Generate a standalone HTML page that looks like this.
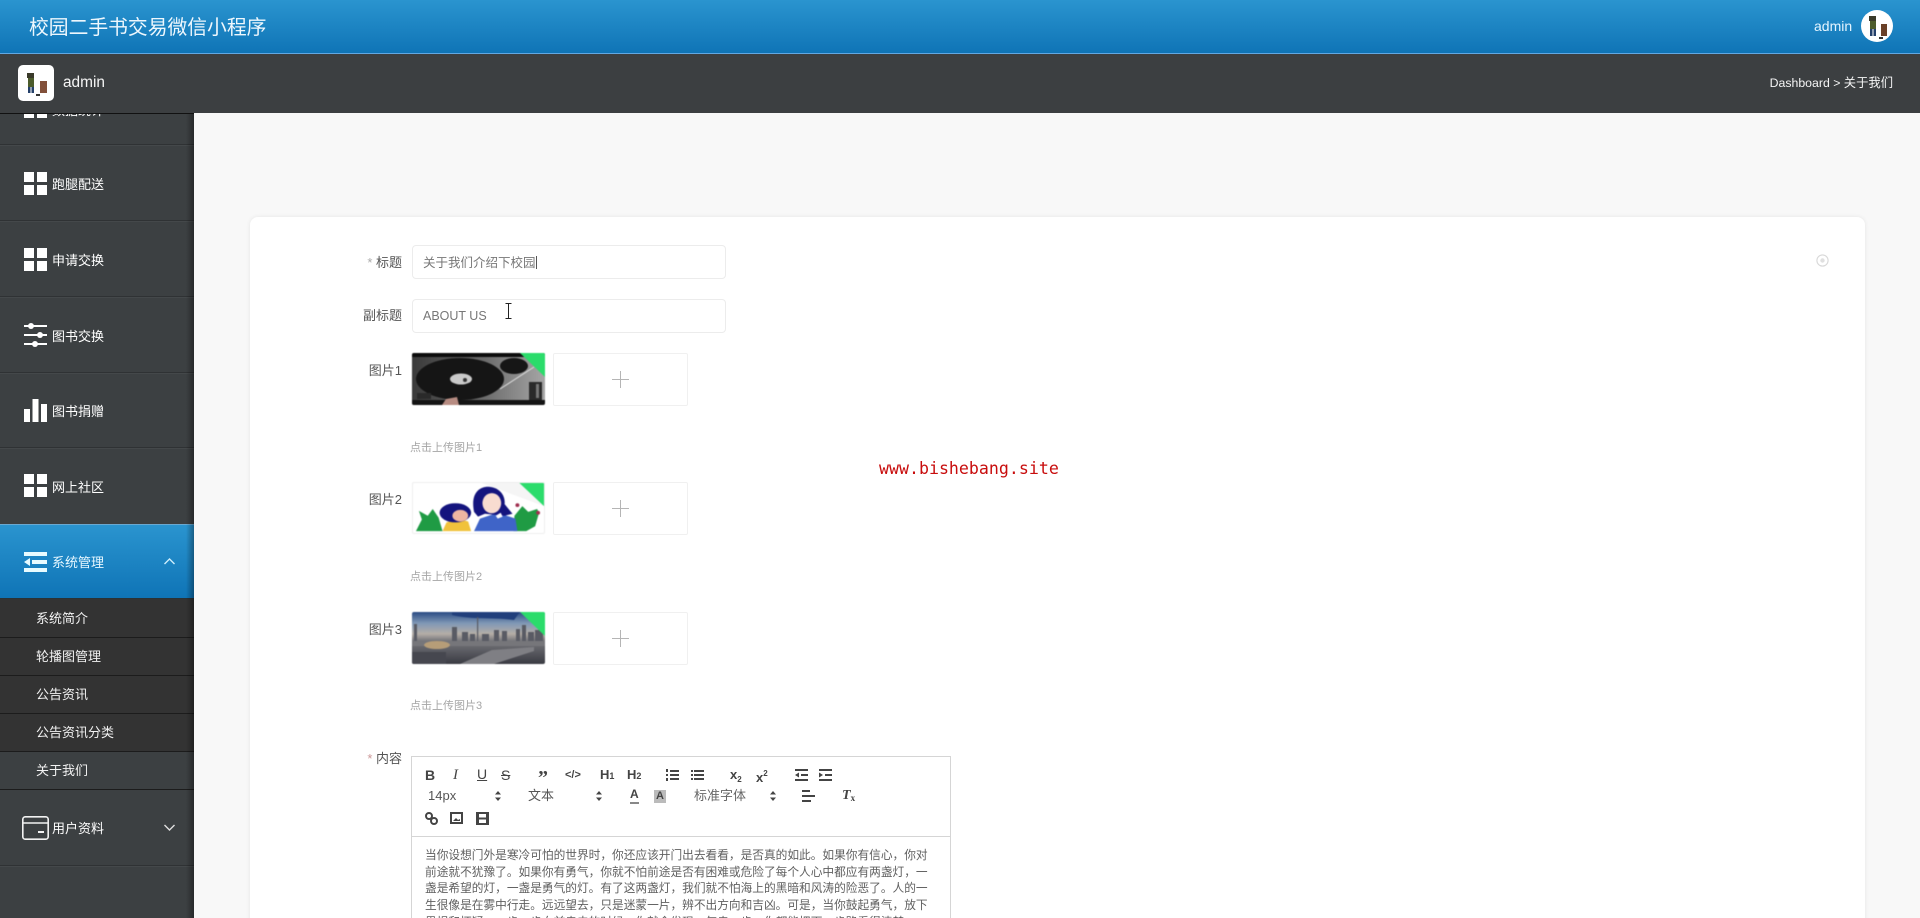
<!DOCTYPE html>
<html lang="zh">
<head>
<meta charset="utf-8">
<title>校园二手书交易微信小程序</title>
<style>
html,body{margin:0;padding:0;width:1920px;height:918px;overflow:hidden;background:#f8f8f8;font-family:"Liberation Sans","Noto Sans CJK SC",sans-serif}
*{box-sizing:border-box}
#root{position:relative;width:1920px;height:918px;overflow:hidden;background:#f8f8f8;filter:blur(.35px)}
.a{position:absolute;white-space:nowrap}
#top{position:absolute;left:0;top:0;width:1920px;height:54px;background:linear-gradient(#2a94cf,#0f74b6);border-bottom:1px solid #62a8e2;z-index:5}
#bar{position:absolute;left:0;top:54px;width:1920px;height:59px;background:#3c3f41;z-index:5}
#side{position:absolute;left:0;top:113px;width:194px;height:805px;background:#3c4042;overflow:hidden;border-top:1px solid #111;z-index:4}
#side:after{content:"";position:absolute;right:0;top:0;width:8px;height:805px;background:linear-gradient(90deg,rgba(0,0,0,0),rgba(0,0,0,.35));pointer-events:none}
.sep{position:absolute;left:0;width:194px;height:2px;background:#2f3234;border-bottom:1px solid #44484a}
.m{position:absolute;left:52px;color:#fff;font-size:13px;line-height:20px;white-space:nowrap}
.s{position:absolute;left:36px;color:#f2f2f2;font-size:13px;line-height:20px;white-space:nowrap}
.sub{position:absolute;left:0;width:194px;background:#333;border-bottom:1px solid #1c1c1c}
#card{position:absolute;left:250px;top:217px;width:1615px;height:720px;background:#fff;border-radius:8px;box-shadow:0 0 5px rgba(0,0,0,.08)}
.l{position:absolute;font-size:13px;line-height:18px;color:#555;text-align:right;white-space:nowrap}
.l i{color:#aaa;font-style:normal}
.in{position:absolute;left:412px;width:314px;height:34px;border:1px solid #ececec;border-radius:4px;background:#fff;font-size:12.5px;line-height:32px;color:#777;padding-left:10px}
.img{position:absolute;left:412px;width:133px;height:52px;overflow:hidden;border-radius:2px;filter:blur(.5px)}
.plus{position:absolute;left:553px;width:135px;height:53px;border:1px solid #f0f0f0;border-radius:2px;background:#fff}
.plus:before{content:"";position:absolute;left:58px;top:25px;width:17px;height:1px;background:#b5b5b5}
.plus:after{content:"";position:absolute;left:66px;top:17px;width:1px;height:17px;background:#b5b5b5}
.h{position:absolute;left:410px;font-size:11px;line-height:14px;color:#a5a5a5;white-space:nowrap}
#ed{position:absolute;left:411px;top:756px;width:540px;height:200px;border:1px solid #d5d5d5;background:#fff}
#tb{position:absolute;left:0;top:0;width:538px;height:80px;border-bottom:1px solid #d5d5d5}
.t{position:absolute;color:#444;font-size:13px;line-height:16px;white-space:nowrap}
.ic{position:absolute;overflow:visible}
#txt{position:absolute;left:425px;top:848px;width:520px;font-size:11.7px;line-height:16.7px;color:#5f5f5f;white-space:nowrap;z-index:2}
#wm{position:absolute;left:879px;top:459px;font-family:"DejaVu Sans Mono","Liberation Mono",monospace;font-size:16.6px;line-height:20px;color:#c80d0d;white-space:nowrap;z-index:6}
</style>
</head>
<body>
<div id="root">
<div id="top">
  <div class="a" style="left:29px;top:14px;font-size:19.8px;line-height:28px;color:#eef7fd">校园二手书交易微信小程序</div>
  <div class="a" style="left:1814px;top:17px;font-size:14px;line-height:18px;color:#e4f5ff">admin</div>
  <svg class="ic" style="left:1861px;top:10px" width="32" height="32" viewBox="0 0 32 32"><circle cx="16" cy="16" r="16" fill="#fff"/><rect x="8" y="6" width="7" height="5" fill="#3a3a2a"/><rect x="9" y="11" width="6" height="8" fill="#4c5c2c"/><rect x="9" y="19" width="2.5" height="7" fill="#24406a"/><rect x="12.5" y="19" width="2.5" height="7" fill="#24406a"/><rect x="20" y="14" width="6" height="12" fill="#6a4028"/><rect x="18" y="27" width="4" height="2" fill="#333"/></svg>
</div>
<div id="bar">
  <div class="a" style="left:18px;top:11px;width:36px;height:36px;background:#fff;border-radius:5px"></div>
  <svg class="ic" style="left:18px;top:11px" width="36" height="36" viewBox="0 0 36 36"><rect x="9" y="8" width="7" height="5" fill="#3a3a2a"/><rect x="10" y="13" width="6" height="9" fill="#4c5c2c"/><rect x="10" y="22" width="2.5" height="6" fill="#24406a"/><rect x="13.5" y="22" width="2.5" height="6" fill="#24406a"/><rect x="22" y="16" width="7" height="12" fill="#82503a"/><rect x="18" y="29" width="4" height="2" fill="#333"/></svg>
  <div class="a" style="left:63px;top:19px;font-size:15.4px;line-height:20px;color:#f5f5f5">admin</div>
  <div class="a" style="right:27px;top:20px;font-size:12.3px;line-height:18px;color:#f5f5f5">Dashboard &gt; 关于我们</div>
</div>

<div id="side">
  <svg class="ic" style="left:24px;top:-19px" width="23" height="23" viewBox="0 0 23 23" fill="#fff"><rect width="10" height="10"/><rect x="13" width="10" height="10"/><rect y="13" width="10" height="10"/><rect x="13" y="13" width="10" height="10"/></svg>
  <div class="m" style="top:-13px">数据统计</div>
  <div class="sep" style="top:30px"></div>

  <svg class="ic" style="left:24px;top:58px" width="23" height="23" viewBox="0 0 23 23" fill="#fff"><rect width="10" height="10"/><rect x="13" width="10" height="10"/><rect y="13" width="10" height="10"/><rect x="13" y="13" width="10" height="10"/></svg>
  <div class="m" style="top:61px">跑腿配送</div>
  <div class="sep" style="top:106px"></div>

  <svg class="ic" style="left:24px;top:134px" width="23" height="23" viewBox="0 0 23 23" fill="#fff"><rect width="10" height="10"/><rect x="13" width="10" height="10"/><rect y="13" width="10" height="10"/><rect x="13" y="13" width="10" height="10"/></svg>
  <div class="m" style="top:137px">申请交换</div>
  <div class="sep" style="top:182px"></div>

  <svg class="ic" style="left:24px;top:209px" width="23" height="23" viewBox="0 0 23 23" fill="#fff"><rect y="2" width="23" height="2"/><rect y="11" width="23" height="2"/><rect y="20" width="23" height="2"/><circle cx="7" cy="3" r="3"/><circle cx="16" cy="12" r="3"/><circle cx="11" cy="21" r="3"/></svg>
  <div class="m" style="top:213px">图书交换</div>
  <div class="sep" style="top:258px"></div>

  <svg class="ic" style="left:24px;top:285px" width="23" height="23" viewBox="0 0 23 23" fill="#fff"><rect y="10" width="6" height="13"/><rect x="8.5" width="6" height="23"/><rect x="17" y="5" width="6" height="18"/></svg>
  <div class="m" style="top:288px">图书捐赠</div>
  <div class="sep" style="top:333px"></div>

  <svg class="ic" style="left:24px;top:360px" width="23" height="23" viewBox="0 0 23 23" fill="#fff"><rect width="10" height="10"/><rect x="13" width="10" height="10"/><rect y="13" width="10" height="10"/><rect x="13" y="13" width="10" height="10"/></svg>
  <div class="m" style="top:364px">网上社区</div>

  <div style="position:absolute;left:0;top:410px;width:194px;height:75px;background:linear-gradient(#2a94cf,#0f74b6);border-top:1px solid #6aa8d0;border-bottom:1px solid #2a3236">
    <svg class="ic" style="left:24px;top:27px" width="23" height="20" viewBox="0 0 23 20" fill="#e8fbff"><rect width="23" height="4"/><rect y="16" width="23" height="4"/><rect x="8" y="8" width="15" height="4"/><path d="M6 6v8L0 10z"/></svg>
    <div class="m" style="top:28px;color:#e6f7ff">系统管理</div>
    <svg class="ic" style="left:164px;top:33px" width="11" height="7" viewBox="0 0 11 7" fill="none" stroke="#cfeefc" stroke-width="1.4"><path d="M.5 6 5.5 1l5 5"/></svg>
  </div>

  <div class="sub" style="top:485px;height:39px"></div>
  <div class="sub" style="top:524px;height:38px"></div>
  <div class="sub" style="top:562px;height:38px"></div>
  <div class="sub" style="top:600px;height:38px"></div>
  <div class="sub" style="top:638px;height:38px;background:#3c4042"></div>
  <div class="s" style="top:495px">系统简介</div>
  <div class="s" style="top:533px">轮播图管理</div>
  <div class="s" style="top:571px">公告资讯</div>
  <div class="s" style="top:609px">公告资讯分类</div>
  <div class="s" style="top:647px">关于我们</div>

  <svg class="ic" style="left:22px;top:702px" width="27" height="24" viewBox="0 0 27 24" fill="none" stroke="#f2f2f2" stroke-width="1.6"><rect x=".8" y=".8" width="25.4" height="22.4" rx="2.5"/><path d="M1 7h25"/><path d="M16 16h6" stroke-width="2"/></svg>
  <div class="m" style="top:705px">用户资料</div>
  <svg class="ic" style="left:164px;top:710px" width="11" height="7" viewBox="0 0 11 7" fill="none" stroke="#e0e0e0" stroke-width="1.4"><path d="M.5 1l5 5 5-5"/></svg>
  <div class="sep" style="top:751px"></div>
</div>

<div id="card"></div>
<svg class="ic" style="left:1816px;top:254px" width="13" height="13" viewBox="0 0 13 13"><circle cx="6.5" cy="6.5" r="5.6" fill="none" stroke="#d8d8d8" stroke-width="1.1"/><circle cx="6.5" cy="6.5" r="2.2" fill="#e0e0e0"/></svg>

<div class="l" style="left:367px;top:254px;width:35px"><i>* </i>标题</div>
<div class="in" style="top:245px;line-height:34px">关于我们介绍下校园<span style="display:inline-block;width:1px;height:13px;background:#555;vertical-align:-2px"></span></div>
<div class="l" style="left:362px;top:307px;width:40px">副标题</div>
<div class="in" style="top:299px">ABOUT US</div>
<svg class="ic" style="left:503px;top:303px;z-index:3" width="11" height="16" viewBox="0 0 11 16" fill="none" stroke="#222" stroke-width="1"><path d="M2.5.5h6M5.5.5v15M2.5 15.5h6"/></svg>

<div class="l" style="left:362px;top:362px;width:40px">图片1</div>
<svg class="img" style="top:353px" viewBox="0 0 133 52" preserveAspectRatio="none">
  <defs><linearGradient id="v" x1="0" x2="1" y1="0" y2="0"><stop offset="0" stop-color="#3a3a3a"/><stop offset=".55" stop-color="#6c6c6c"/><stop offset="1" stop-color="#a6a6a6"/></linearGradient></defs>
  <rect width="133" height="52" fill="url(#v)"/><rect width="133" height="4" fill="#0c0c0c"/><rect y="47" width="133" height="5" fill="#141414"/>
  <ellipse cx="48" cy="26" rx="44" ry="21" fill="#151515"/><ellipse cx="49" cy="26" rx="11" ry="5.5" fill="#c9c9c9"/><circle cx="53" cy="27" r="2" fill="#333"/>
  <ellipse cx="102" cy="13" rx="14" ry="8" fill="#161616"/><path d="M122 14 88 36" stroke="#ddd" stroke-width="1"/>
  <rect x="117" y="29" width="13" height="18" fill="#2a2a2a"/><rect x="124" y="31" width="3" height="14" fill="#777"/>
  <path d="M30 52l4-6 11-2 2 8z" fill="#b78c82"/><rect x="5" y="40" width="14" height="6" fill="#2a2a2a"/>
  <path d="M108 0h25v24z" fill="#2bdc6b"/>
</svg>
<div class="plus" style="top:353px"></div>
<div class="h" style="top:441px">点击上传图片1</div>

<div class="l" style="left:362px;top:491px;width:40px">图片2</div>
<svg class="img" style="top:482px;border:1px solid #eee" viewBox="0 0 133 52" preserveAspectRatio="none">
  <rect width="133" height="52" fill="#fff"/><path d="M70 0h63v24z" fill="#f5f5f5"/>
  <path d="M3 50 9 38 6 29l9 5 5-7 6 9 4 14z" fill="#1f9b44"/>
  <path d="M102 50l1-16 8-10 6 6 9-3 2 4-4 14-9 5z" fill="#1f9b44"/>
  <path d="M30 50l4-9 12-4 10 3 3 10z" fill="#f0c23c"/>
  <ellipse cx="43" cy="31" rx="16" ry="10" fill="#14147e"/><ellipse cx="48" cy="34" rx="8" ry="6" fill="#eeb5a2"/>
  <path d="M62 50l6-13 18-6 18 6 2 13z" fill="#3f64c8"/>
  <path d="M62 30C58 10 68 3 78 4c10 1 16 9 15 18l8 10-8 2-20-2-7 3z" fill="#14147e"/>
  <ellipse cx="80" cy="21" rx="9.5" ry="10.5" fill="#f8dcd0"/><path d="M84 34l5-3 2 4-5 2z" fill="#fff"/>
  <circle cx="106" cy="23" r="2" fill="#a03050"/><circle cx="127" cy="31" r="2" fill="#a03050"/>
  <path d="M108 0h25v24z" fill="#2bdc6b"/>
</svg>
<div class="plus" style="top:482px"></div>
<div class="h" style="top:570px">点击上传图片2</div>

<div class="l" style="left:362px;top:621px;width:40px">图片3</div>
<svg class="img" style="top:612px" viewBox="0 0 133 52" preserveAspectRatio="none">
  <defs><linearGradient id="c" x1="0" x2="0" y1="0" y2="1"><stop offset="0" stop-color="#2a4b84"/><stop offset=".22" stop-color="#8199b6"/><stop offset=".42" stop-color="#b5aea6"/><stop offset=".55" stop-color="#77777c"/><stop offset="1" stop-color="#393a42"/></linearGradient></defs>
  <rect width="133" height="52" fill="url(#c)"/>
  <path d="M40 0h68l-6 8C80 5 60 8 40 3z" fill="#213f7c"/>
  <g fill="#595b64"><rect x="40" y="15" width="5" height="14"/><rect x="65" y="5" width="1.2" height="24"/><rect x="82" y="18" width="5" height="11"/><rect x="90" y="19" width="5" height="10"/><rect x="104" y="17" width="4" height="12"/><rect x="110" y="13" width="4" height="16"/><rect x="116" y="20" width="6" height="9"/><rect x="2" y="12" width="3" height="20"/><rect x="50" y="20" width="6" height="9"/><rect x="58" y="22" width="5" height="7"/><rect x="70" y="22" width="7" height="7"/><rect x="123" y="18" width="8" height="11"/></g>
  <rect x="0" y="29" width="133" height="5" fill="#76767a"/>
  <ellipse cx="25" cy="33" rx="13" ry="4" fill="#b69d78"/>
  <path d="M0 40h34v12H0z" fill="#46474f"/>
  <path d="M48 52l32-14 42-3v4l-40 13z" fill="#7f7f84"/>
  <path d="M108 0h25v24z" fill="#2bdc6b"/>
</svg>
<div class="plus" style="top:612px"></div>
<div class="h" style="top:699px">点击上传图片3</div>

<div class="l" style="left:367px;top:750px;width:35px"><i style="color:#c99">* </i>内容</div>

<div id="ed"><div id="tb"></div></div>
<div class="t" style="left:425px;top:767px;font-weight:bold;font-size:14px">B</div>
<div class="t" style="left:453px;top:767px;font-style:italic;font-family:'Liberation Serif',serif;font-size:15px">I</div>
<div class="t" style="left:477px;top:766px;font-size:14px;text-decoration:underline">U</div>
<div class="t" style="left:501px;top:767px;font-size:14px;text-decoration:line-through">S</div>
<div class="t" style="left:538px;top:768px;font-weight:bold;font-size:20px;font-family:'Liberation Serif',serif;line-height:20px">”</div>
<div class="t" style="left:565px;top:767px;font-size:11px;font-weight:bold">&lt;/&gt;</div>
<div class="t" style="left:600px;top:767px;font-size:13px;font-weight:bold">H<span style="font-size:9px">1</span></div>
<div class="t" style="left:627px;top:767px;font-size:13px;font-weight:bold">H<span style="font-size:9px">2</span></div>
<svg class="ic" style="left:666px;top:769px" width="13" height="12" fill="#444"><rect x="4" y="1" width="9" height="2"/><rect x="4" y="5" width="9" height="2"/><rect x="4" y="9" width="9" height="2"/><rect y="0" width="2" height="3"/><rect y="5" width="2" height="2"/><rect y="9" width="2" height="3"/></svg>
<svg class="ic" style="left:691px;top:769px" width="13" height="12" fill="#444"><rect x="3" y="1" width="10" height="2"/><rect x="3" y="5" width="10" height="2"/><rect x="3" y="9" width="10" height="2"/><rect y="1" width="2" height="2"/><rect y="5" width="2" height="2"/><rect y="9" width="2" height="2"/></svg>
<div class="t" style="left:730px;top:767px;font-size:13px;font-weight:bold">x<span style="font-size:8px;vertical-align:-3px">2</span></div>
<div class="t" style="left:756px;top:766px;font-size:13px;font-weight:bold">x<span style="font-size:8px;vertical-align:6px">2</span></div>
<svg class="ic" style="left:795px;top:769px" width="13" height="12" fill="#444"><rect width="13" height="2"/><rect x="6" y="5" width="7" height="2"/><rect y="10" width="13" height="2"/><path d="M4 3.5v5L0 6z"/></svg>
<svg class="ic" style="left:819px;top:769px" width="13" height="12" fill="#444"><rect width="13" height="2"/><rect x="6" y="5" width="7" height="2"/><rect y="10" width="13" height="2"/><path d="M0 3.5v5L4 6z"/></svg>
<div class="t" style="left:428px;top:788px;font-size:13px;color:#555">14px</div>
<svg class="ic" style="left:495px;top:791px" width="6" height="10" fill="#444"><path d="M3 0l3 3.5H0zM3 10l3-3.5H0z"/></svg>
<div class="t" style="left:528px;top:788px;font-size:13px;color:#555">文本</div>
<svg class="ic" style="left:596px;top:791px" width="6" height="10" fill="#444"><path d="M3 0l3 3.5H0zM3 10l3-3.5H0z"/></svg>
<div class="t" style="left:630px;top:787px;font-size:12px;font-weight:bold;border-bottom:2px solid #888;line-height:15px">A</div>
<div class="t" style="left:654px;top:790px;width:12px;height:13px;background:#bbb;font-size:11px;line-height:13px;text-align:center;font-weight:bold">A</div>
<div class="t" style="left:694px;top:788px;font-size:13px;color:#666">标准字体</div>
<svg class="ic" style="left:770px;top:791px" width="6" height="10" fill="#444"><path d="M3 0l3 3.5H0zM3 10l3-3.5H0z"/></svg>
<svg class="ic" style="left:802px;top:790px" width="13" height="12" fill="#444"><rect width="8" height="2"/><rect y="5" width="13" height="2"/><rect y="10" width="9" height="2"/></svg>
<div class="t" style="left:842px;top:788px;font-size:14px;font-style:italic;font-family:'Liberation Serif',serif;font-weight:bold">T<span style="font-size:9px;font-style:normal;vertical-align:-2px">x</span></div>
<svg class="ic" style="left:425px;top:812px" width="13" height="13" fill="none" stroke="#444" stroke-width="2"><circle cx="4" cy="4" r="3"/><circle cx="9" cy="9" r="3"/></svg>
<svg class="ic" style="left:450px;top:812px" width="13" height="12"><rect x="1" y="1" width="11" height="10" fill="#fff" stroke="#444" stroke-width="2"/><path d="M3 9l3-3 2 2 2-1v2z" fill="#444"/></svg>
<svg class="ic" style="left:476px;top:812px" width="13" height="13" fill="#444"><rect width="13" height="13"/><rect x="3" y="2" width="7" height="3.5" fill="#fff"/><rect x="3" y="7.5" width="7" height="3.5" fill="#fff"/></svg>

<div id="txt">当你设想门外是寒冷可怕的世界时，你还应该开门出去看看，是否真的如此。如果你有信心，你对<br>前途就不犹豫了。如果你有勇气，你就不怕前途是否有困难或危险了每个人心中都应有两盏灯，一<br>盏是希望的灯，一盏是勇气的灯。有了这两盏灯，我们就不怕海上的黑暗和风涛的险恶了。人的一<br>生很像是在雾中行走。远远望去，只是迷蒙一片，辨不出方向和吉凶。可是，当你鼓起勇气，放下<br>畏惧和怀疑，一步一步向前走去的时候，你就会发现，每走一步，你都能把下一步路看得清楚。</div>

<div id="wm">www.bishebang.site</div>
</div>
</body>
</html>
